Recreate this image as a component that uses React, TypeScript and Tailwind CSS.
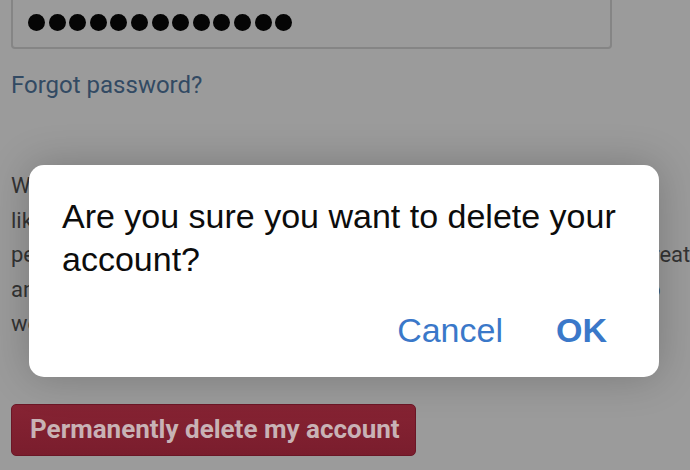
export default function App() {
  const lines = [
    "We're sorry to see you go. If you would",
    "like to delete your account, please note that",
    "permanently deleting removes all the photos and pages that you create",
    "and this cannot be undone. Please be certain that you truly want to",
    "we can't restore anything once it is gone.",
  ];

  return (
    <div className="relative w-[690px] h-[470px] overflow-hidden bg-[#9b9b9b] font-['Roboto',sans-serif]">
      <div className="flex flex-col px-[11px]">
        {/* password field */}
        <div className="-mt-5 h-[69px] w-[601px] rounded-[4px] border-2 border-[#858585] flex items-end pl-[15px] pb-[16px]">
          <div className="flex gap-[3.6px]">
            {Array.from({ length: 13 }).map((_, i) => (
              <span key={i} className="w-[17px] h-[17px] rounded-full bg-[#050505]" />
            ))}
          </div>
        </div>

        <a className="mt-[22px] text-[24px] leading-[28px] text-[#324a63]">Forgot password?</a>

        <div className="mt-[70px] text-[22px] leading-[34.5px] text-[#333333] whitespace-nowrap">
          {lines.map((l) => (
            <div key={l}>{l}</div>
          ))}
        </div>

        <button className="mt-[62px] w-[405px] h-[52px] rounded-[5px] border border-[#6b1726] bg-gradient-to-b from-[#862333] to-[#7a1d2d] text-left pl-[18px] text-[26px] font-bold text-[#c8b2b5]">
          Permanently delete my account
        </button>
      </div>

      {/* alert dialog */}
      <div className="absolute left-[29px] top-[165px] w-[630px] h-[212px] rounded-[15px] bg-white shadow-[0_0_40px_rgba(0,0,0,0.22)] flex flex-col pl-[33px] pr-[20px] pt-[30px] font-['Liberation_Sans',sans-serif]">
        <p className="text-[34px] leading-[43px] text-[#0c0c0c]">
          Are you sure you want to delete your account?
        </p>
        <div className="mt-[24px] pr-[32px] flex justify-end items-center gap-[53px] text-[34px] text-[#3a78c9]">
          <span>Cancel</span>
          <span className="font-bold">OK</span>
        </div>
      </div>
    </div>
  );
}
